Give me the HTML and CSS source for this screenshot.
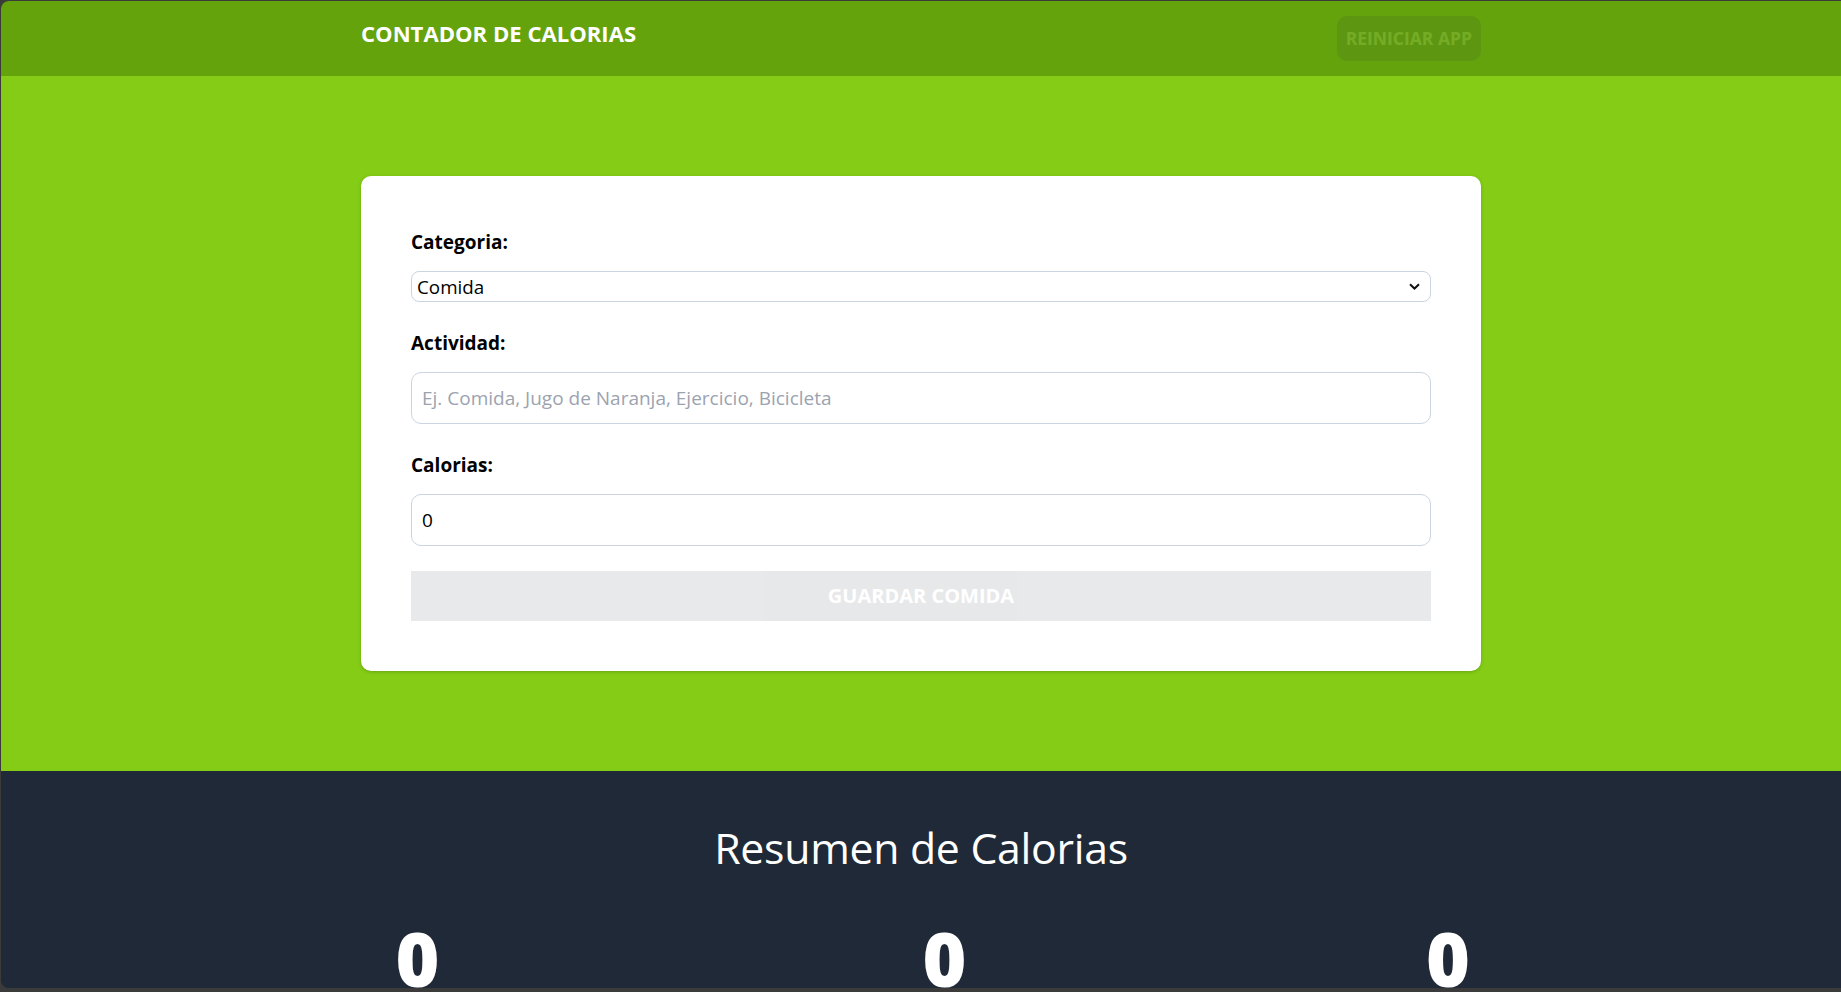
FILE: index.html
```html
<!DOCTYPE html>
<html lang="es">
<head>
<meta charset="utf-8">
<title>Contador de Calorias</title>
<link rel="stylesheet" href="styles.css">
</head>
<body>
<div class="window">
  <header class="header">
    <div class="header-inner">
      <h1 class="brand">Contador de Calorias</h1>
      <button class="reset-btn" disabled>Reiniciar App</button>
    </div>
  </header>

  <section class="main">
    <form class="card">
      <div class="field">
        <label class="label" for="category">Categoria:</label>
        <div class="select-wrap">
          <select id="category" class="select">
            <option>Comida</option>
            <option>Ejercicio</option>
          </select>
          <svg class="chevron" width="11" height="7" viewBox="0 0 11 7" aria-hidden="true"><path d="M1 1.2 L5.5 5.5 L10 1.2" fill="none" stroke="#111" stroke-width="2"/></svg>
        </div>
      </div>
      <div class="field">
        <label class="label" for="activity">Actividad:</label>
        <input id="activity" class="input" type="text" placeholder="Ej. Comida, Jugo de Naranja, Ejercicio, Bicicleta">
      </div>
      <div class="field">
        <label class="label" for="calories">Calorias:</label>
        <input id="calories" class="input" type="number" value="0">
      </div>
      <button type="button" class="save-btn" disabled>Guardar Comida</button>
    </form>
  </section>

  <section class="summary">
    <h2 class="summary-title">Resumen de Calorias</h2>
    <div class="stats">
      <p class="stat stat-a"><span class="stat-num">0</span><span class="stat-label">Consumidas</span></p>
      <p class="stat stat-b"><span class="stat-num">0</span><span class="stat-label">Ejercicio</span></p>
      <p class="stat stat-c"><span class="stat-num">0</span><span class="stat-label">Diferencia</span></p>
    </div>
  </section>
</div>
</body>
</html>
```

FILE: styles.css
```css
* { box-sizing: border-box; }

html, body {
  margin: 0;
  padding: 0;
}

body {
  background: #3b3b3b;
  font-family: "Open Sans", "Noto Sans", sans-serif;
  line-height: 1.5;
  overflow: hidden;
}

.window {
  margin: 1px 0 0 1px;
  height: 987px;
  border-radius: 8px 0 0 8px;
  overflow: hidden;
  background: #1f2937;
}

.header {
  background: #65a30d;
  padding: 15px 0;
}

.header-inner {
  width: 1120px;
  margin: 0 auto;
  display: flex;
  justify-content: space-between;
}

.brand {
  margin: 0;
  color: #fff;
  font-size: 22.1px;
  line-height: 35px;
  font-weight: 700;
  text-transform: uppercase;
}

.reset-btn {
  background: #1f2937;
  color: #fff;
  border: none;
  border-radius: 10px;
  padding: 10px 9px;
  font-family: inherit;
  font-size: 17.5px;
  line-height: 25px;
  font-weight: 700;
  text-transform: uppercase;
  opacity: 0.1;
}

.main {
  background: #84cc16;
  padding: 100px 0;
}

.card {
  width: 1120px;
  margin: 0 auto;
  background: #fff;
  border-radius: 10px;
  padding: 50px;
  box-shadow: 0 1px 4px rgba(0,0,0,0.12), 0 1px 2px rgba(0,0,0,0.08);
  display: flex;
  flex-direction: column;
  gap: 25px;
}

.field {
  display: flex;
  flex-direction: column;
  gap: 15px;
}

.label {
  font-size: 19px;
  line-height: 30px;
  font-weight: 700;
  color: #000;
  padding-top: 1px;
  margin-bottom: -1px;
}

.select-wrap {
  position: relative;
}

.select {
  appearance: none;
  -webkit-appearance: none;
  width: 100%;
  height: 31px;
  border: 1px solid #cbd5e1;
  border-radius: 8px;
  background: #fff;
  padding: 0 5px;
  font-family: inherit;
  font-size: 18.8px;
  color: #000;
}

.chevron {
  position: absolute;
  right: 11px;
  top: 12px;
}

.input {
  width: 100%;
  height: 52px;
  border: 1px solid #cbd5e1;
  border-radius: 10px;
  padding: 10px;
  font-family: inherit;
  font-size: 19px;
  line-height: 30px;
  color: #000;
  background: #fff;
}

.input::placeholder {
  color: #9ca3af;
}

.input[type=number]::-webkit-inner-spin-button,
.input[type=number]::-webkit-outer-spin-button {
  -webkit-appearance: none;
  margin: 0;
}

.save-btn {
  width: 100%;
  height: 50px;
  background: #1f2937;
  color: #fff;
  border: none;
  padding: 10px;
  font-family: inherit;
  font-size: 20px;
  line-height: 30px;
  font-weight: 700;
  text-transform: uppercase;
  opacity: 0.1;
}

.summary {
  background: #1f2937;
  padding: 50px 0;
}

.summary-title {
  margin: 2px 0 -2px;
  text-align: center;
  color: #fff;
  font-size: 42.8px;
  line-height: 50px;
  font-weight: 400;
  letter-spacing: -0.3px;
}

.stats {
  width: 1120px;
  margin: 50px auto 0;
  display: flex;
  justify-content: space-between;
}

.stat {
  margin: 0;
  display: flex;
  flex-direction: column;
  align-items: center;
  gap: 15px;
  color: #fff;
  font-weight: 700;
  font-size: 20px;
}

.stat-label {
  white-space: nowrap;
}

.stat-a { width: 113px; }
.stat-b { width: 100px; }
.stat-c { width: 66px; }

.stat-num {
  font-size: 75px;
  line-height: 1;
  font-weight: 900;
}
```
